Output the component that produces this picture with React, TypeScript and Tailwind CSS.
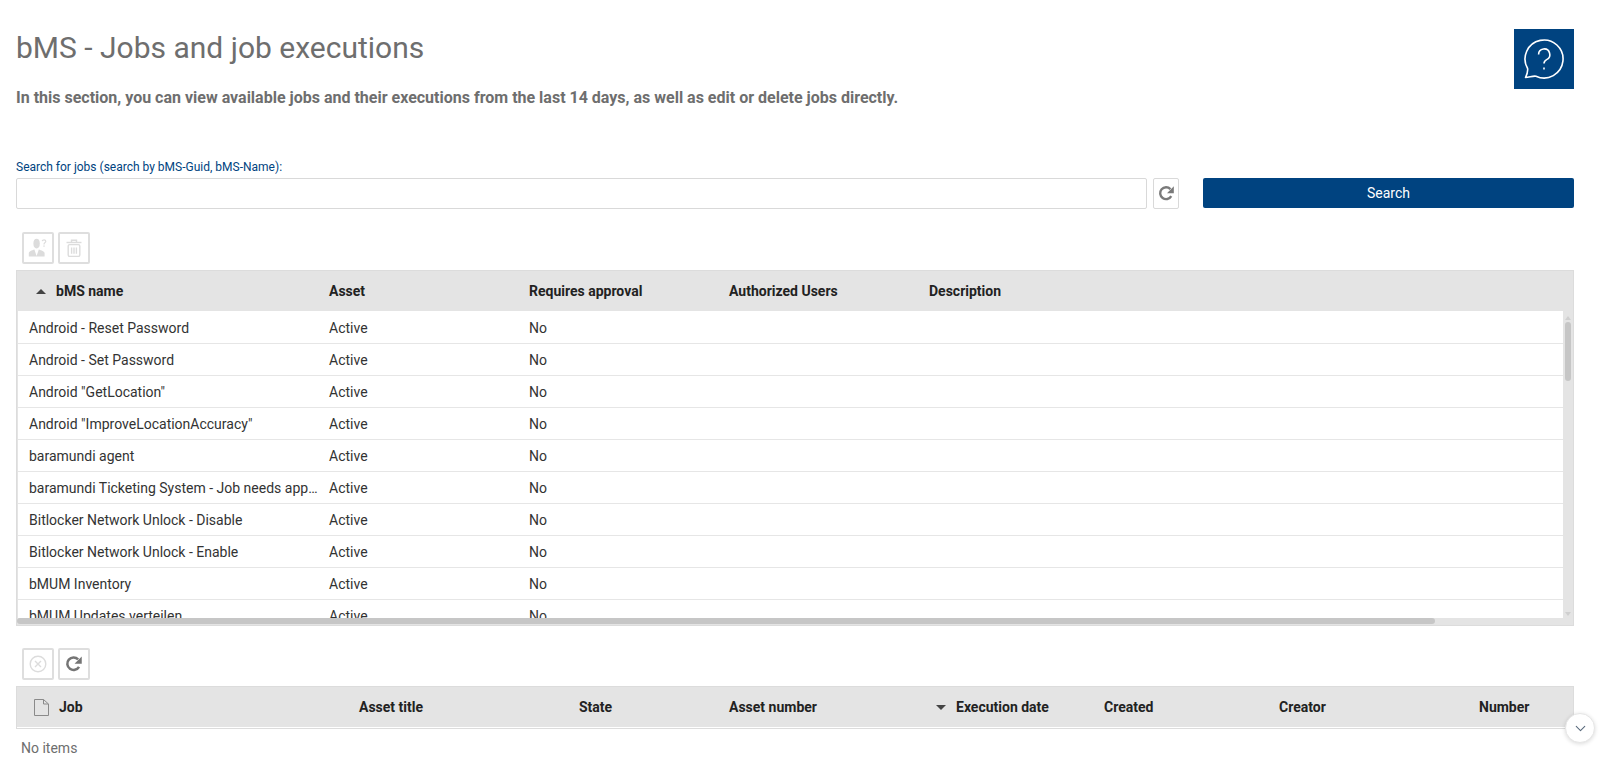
import { ChevronDown } from 'lucide-react';

const jobs = [
  'Android - Reset Password',
  'Android - Set Password',
  'Android "GetLocation"',
  'Android "ImproveLocationAccuracy"',
  'baramundi agent',
  'baramundi Ticketing System - Job needs approval',
  'Bitlocker Network Unlock - Disable',
  'Bitlocker Network Unlock - Enable',
  'bMUM Inventory',
  'bMUM Updates verteilen',
];

const ReloadIcon = ({ size, color }: { size: number; color: string }) => (
  <svg width={size} height={size} viewBox="0 0 20 20" fill="none">
    <path d="M15.6 13.2A7 7 0 1 1 14.6 4.8" stroke={color} strokeWidth="2.8" />
    <path d="M18.6 1.6V9.6H10.6Z" fill={color} />
  </svg>
);

const HelpIcon = () => (
  <svg width="42" height="42" viewBox="0 0 42 42" fill="none" stroke="white" strokeWidth="1.6">
    <path d="M4.6 30.5A19 19 0 1 1 13 38.2C10 37.5 6 39.5 2.5 39.5C4 36.5 5 33.5 4.6 30.5Z" strokeLinejoin="round" />
    <path d="M15.6 16.5A5.6 5.6 0 1 1 23.6 21.6C21.7 22.6 21 23.6 21 25.6" />
    <path d="M21 29.4V31.4" />
  </svg>
);

const UserQuestionIcon = () => (
  <svg width="20" height="20" viewBox="0 0 20 20" fill="#dcdcdc">
    <ellipse cx="8.6" cy="5.6" rx="3.2" ry="4.8" />
    <path d="M0.8 18.5V15.2C0.8 13.4 4 12.4 6.4 11.6L8.6 18L10.8 11.6C13.2 12.4 16.6 13.4 16.6 15.2V18.5Z" />
    <path d="M14.2 3.2C14.6 1.4 17.6 1.4 17.8 3.2C17.8 4.6 16 4.8 16 6.4" fill="none" stroke="#dcdcdc" strokeWidth="1.2" />
    <rect x="15.4" y="7.4" width="1.2" height="1.4" />
  </svg>
);

const TrashIcon = () => (
  <svg width="20" height="20" viewBox="0 0 20 20" fill="none" stroke="#dcdcdc" strokeWidth="1.4">
    <path d="M2.5 4.5H17.5" />
    <path d="M7.5 4.5V2.2H12.5V4.5" />
    <rect x="4.2" y="6.6" width="11.6" height="11.8" rx="1.5" />
    <path d="M7.6 9.4V15.8M10 9.4V15.8M12.4 9.4V15.8" />
  </svg>
);

const CancelIcon = () => (
  <svg width="18" height="18" viewBox="0 0 18 18" fill="none" stroke="#dcdcdc" strokeWidth="1.4">
    <circle cx="9" cy="9" r="7.8" />
    <path d="M6 6L12 12M12 6L6 12" />
  </svg>
);

const FileIcon = () => (
  <svg width="15" height="17" viewBox="0 0 15 17" fill="none" stroke="#8a8a8a">
    <path d="M0.5 0.5H9.5L14.5 5V16.5H0.5Z" />
    <path d="M9.5 0.5V5H14.5" />
  </svg>
);

const ToolButton = ({ children }: { children: React.ReactNode }) => (
  <button className="flex h-8 w-8 items-center justify-center border-2 border-[#dedede] bg-white rounded-[2px]">
    {children}
  </button>
);

export default function App() {
  return (
    <div className="relative h-[757px] w-[1601px] overflow-hidden bg-white font-['Roboto',sans-serif] text-sm text-[#333]">
      {/* Page heading */}
      <div className="flex justify-between pl-4 pr-[27px] pt-[29px]">
        <div>
          <h1 className="text-[30px] leading-[38px] text-[#6e6e6e]">bMS - Jobs and job executions</h1>
          <p className="mt-[21px] text-base font-bold leading-5 text-[#6e6e6e]">
            In this section, you can view available jobs and their executions from the last 14 days, as well as edit or delete jobs directly.
          </p>
        </div>
        <div className="flex h-[60px] w-[60px] items-center justify-center bg-[#004380]">
          <HelpIcon />
        </div>
      </div>

      {/* Search */}
      <div className="mt-[51px] pl-4 pr-[27px]">
        <label className="block h-[19px] text-xs leading-4 text-[#004380]">Search for jobs (search by bMS-Guid, bMS-Name):</label>
        <div className="flex items-start">
          <input className="h-[31px] w-[1131px] rounded-[2px] border border-[#d9d9d9] bg-white outline-none" />
          <button className="ml-[6px] flex h-[31px] w-[26px] items-center justify-center rounded-[2px] border border-[#d9d9d9]">
            <ReloadIcon size={17} color="#7a7a7a" />
          </button>
          <button className="ml-6 h-[30px] flex-1 rounded-[2px] bg-[#004380] pb-px text-sm font-normal text-white">Search</button>
        </div>
      </div>

      {/* Jobs table */}
      <div className="ml-4 mr-[27px] mt-[23px]">
        <div className="flex gap-1 pl-[6px]">
          <ToolButton><UserQuestionIcon /></ToolButton>
          <ToolButton><TrashIcon /></ToolButton>
        </div>
        <div className="mt-[6px] border border-[#dcdcdc] bg-[#e4e4e4]">
          <div className="flex h-[40px] items-center font-bold text-[#222]">
            <div className="flex w-[312px] items-center pl-[19px]">
              <span className="mr-[10px] h-0 w-0 border-x-[5.5px] border-b-[5px] border-x-transparent border-b-[#444]" />
              bMS name
            </div>
            <div className="w-[200px]">Asset</div>
            <div className="w-[200px]">Requires approval</div>
            <div className="w-[200px]">Authorized Users</div>
            <div>Description</div>
          </div>
          <div className="flex h-[307px]">
            <div className="ml-px flex-1 overflow-hidden bg-white pt-px">
              {jobs.map((job) => (
                <div key={job} className="flex h-8 items-center border-b border-[#e6e6e6]">
                  <div className="w-[311px] truncate pl-[11px] pr-[8px]">{job}</div>
                  <div className="w-[200px]">Active</div>
                  <div>No</div>
                </div>
              ))}
            </div>
            <div className="flex w-[10px] flex-col items-center">
              <span className="mt-[5px] h-0 w-0 border-x-[3.5px] border-b-[4px] border-x-transparent border-b-[#cfcfcf]" />
              <span className="mt-[2px] h-[59px] w-[6px] rounded-[3px] bg-[#c6c6c6]" />
              <span className="mt-auto mb-[2px] h-0 w-0 border-x-[3.5px] border-t-[4px] border-x-transparent border-t-[#cfcfcf]" />
            </div>
          </div>
          <div className="flex h-[7px] items-start">
            <div className="h-[6px] w-[1418px] rounded-[3px] bg-[#c6c6c6]" />
          </div>
        </div>
      </div>

      {/* Executions table */}
      <div className="ml-4 mr-[27px] mt-[22px]">
        <div className="flex gap-1 pl-[6px]">
          <ToolButton><CancelIcon /></ToolButton>
          <ToolButton><ReloadIcon size={18} color="#757575" /></ToolButton>
        </div>
        <div className="mt-[6px] border-x border-t border-[#dcdcdc] bg-[#e4e4e4]">
          <div className="flex h-[40px] items-center font-bold text-[#222]">
            <div className="flex w-[342px] items-center pl-[17px]">
              <span className="mr-[10px]"><FileIcon /></span>
              Job
            </div>
            <div className="w-[220px]">Asset title</div>
            <div className="w-[150px]">State</div>
            <div className="flex w-[375px] items-center">
              <span className="w-[207px]">Asset number</span>
              <span className="mr-[10px] h-0 w-0 border-x-[5.5px] border-t-[5px] border-x-transparent border-t-[#444]" />
              Execution date
            </div>
            <div className="w-[175px]">Created</div>
            <div className="w-[200px]">Creator</div>
            <div>Number</div>
          </div>
          <div className="h-px bg-white" />
          <div className="h-px bg-[#dcdcdc]" />
        </div>
        <div className="mt-[10px] pl-[5px] leading-[18px] text-[#6e6e6e]">No items</div>
      </div>

      {/* Scroll-down button */}
      <button className="absolute left-[1565px] top-[713px] flex h-[30px] w-[30px] items-center justify-center rounded-full border border-[#e6e6e6] bg-white shadow-[0_1px_4px_rgba(0,0,0,0.15)]">
        <ChevronDown size={17} strokeWidth={1.5} color="#5a6b7d" />
      </button>
    </div>
  );
}
